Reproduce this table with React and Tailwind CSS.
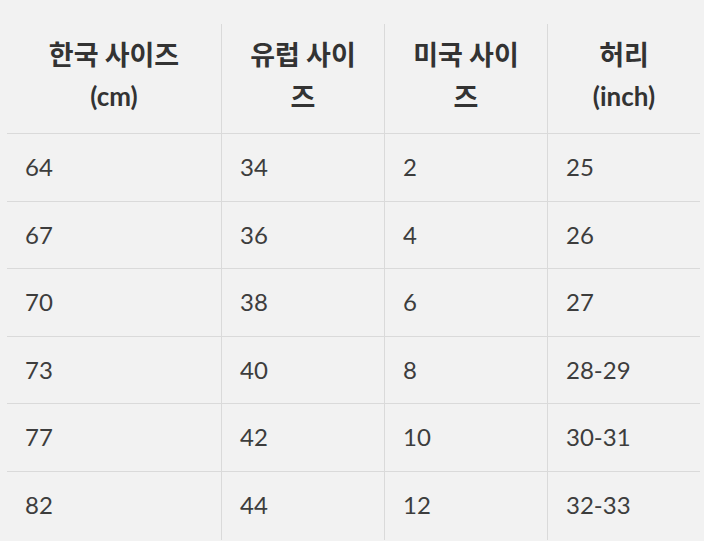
import React from "react";

const header = [
  ["한국 사이즈", "(cm)"],
  ["유럽 사이즈", null],
  ["미국 사이즈", null],
  ["허리", "(inch)"],
];
const rows = [
  ["64", "34", "2", "25"],
  ["67", "36", "4", "26"],
  ["70", "38", "6", "27"],
  ["73", "40", "8", "28-29"],
  ["77", "42", "10", "30-31"],
  ["82", "44", "12", "32-33"],
];

const font = { fontFamily: 'Lato, "Noto Sans CJK KR", sans-serif' };
const ko = { fontFamily: '"Noto Sans CJK KR", sans-serif' };

export default function App() {
  return (
    <div className="min-h-[541px] w-full bg-[#f2f2f2] pt-[24px] pl-[7px]" style={font}>
      <div className="grid w-[693px] grid-cols-[214px_163px_163px_153px] text-[24px] leading-[42.6px] text-[#3d3d3d]">
        {header.map((h, i) => (
          <div
            key={"h" + i}
            className={
              "h-[110px] border-b border-[#dadada] px-[18px] pt-[9px] text-center font-bold text-[#333333]" +
              (i > 0 ? " border-l" : "")
            }
          >
            <div className="h-[42px] text-[27px] leading-[42px]" style={ko}>
              {h[0]}
            </div>
            {h[1] && <div className="h-[42px] text-[26px] leading-[42px]">{h[1]}</div>}
          </div>
        ))}
        {rows.map((r, ri) =>
          r.map((c, ci) => (
            <div
              key={ri + "-" + ci}
              className={
                "px-[18px] py-3 border-[#dadada]" +
                (ri < rows.length - 1 ? " border-b" : " pb-[13px]") +
                (ci > 0 ? " border-l" : "")
              }
            >
              {c}
            </div>
          ))
        )}
      </div>
    </div>
  );
}
